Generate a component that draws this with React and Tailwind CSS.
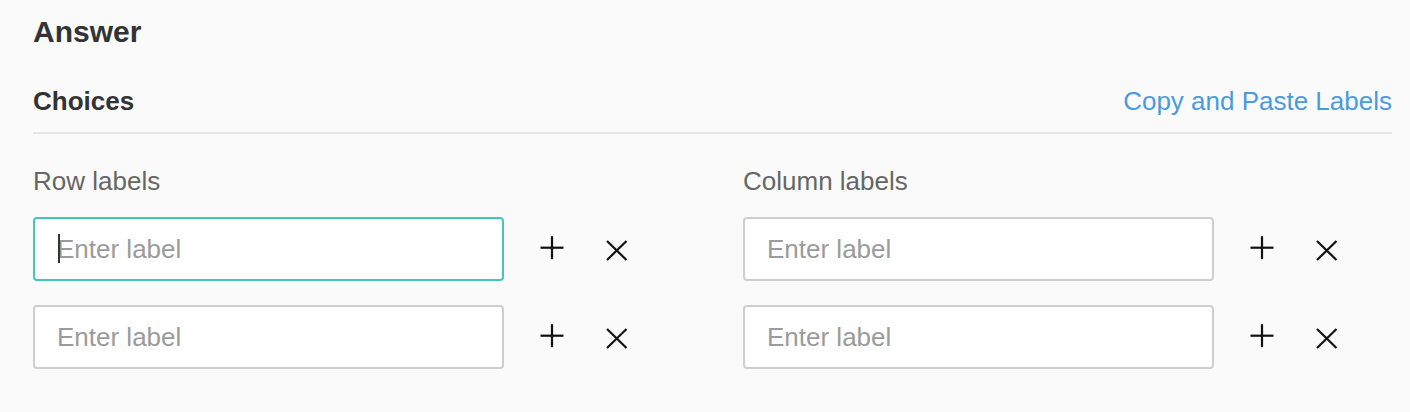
import React from "react";

function PlusIcon() {
  return (
    <svg width="64" height="64" viewBox="0 0 64 64" fill="none" stroke="#111" strokeWidth="2.2" aria-hidden="true">
      <line x1="20.5" y1="30.7" x2="43.5" y2="30.7" />
      <line x1="32" y1="19.2" x2="32" y2="42.2" />
    </svg>
  );
}

function XIcon() {
  return (
    <svg width="64" height="64" viewBox="0 0 64 64" fill="none" stroke="#111" strokeWidth="2.2" aria-hidden="true">
      <line x1="23" y1="24" x2="42.5" y2="43" />
      <line x1="42.5" y1="24" x2="23" y2="43" />
    </svg>
  );
}

function LabelRow({ focused }) {
  return (
    <div className="flex">
      <div className="relative">
        <input
          type="text"
          placeholder="Enter label"
          className={
            "block w-[471px] h-[64px] rounded-[4px] border-2 bg-white pl-[22px] pr-[12px] text-[26px] text-[#333] outline-none placeholder:text-[#9b9b9b] caret-transparent " +
            (focused ? "border-[#48c4bf]" : "border-[#cecece]")
          }
        />
        {focused && (
          <span className="pointer-events-none absolute left-[25px] top-[17px] h-[29px] w-[2px] bg-[#333]" />
        )}
      </div>
      <button type="button" className="ml-[16px] flex h-[64px] w-[64px] items-center justify-center" aria-label="Add">
        <PlusIcon />
      </button>
      <button type="button" className="flex h-[64px] w-[64px] items-center justify-center" aria-label="Remove">
        <XIcon />
      </button>
    </div>
  );
}

function Column({ title, focusFirst }) {
  return (
    <div>
      <div className="text-[26px] leading-[30px] text-[#666]">{title}</div>
      <div className="mt-[21px] flex flex-col gap-[24px]">
        <LabelRow focused={focusFirst} />
        <LabelRow />
      </div>
    </div>
  );
}

export default function App() {
  return (
    <div
      className="min-h-screen bg-[#fafafa] pl-[33px] pr-[18px] pt-[14px]"
      style={{ fontFamily: '"Liberation Sans", Arial, Helvetica, sans-serif' }}
    >
      <h2 className="text-[30px] font-bold leading-[36px] text-[#333]">Answer</h2>
      <div className="mt-[36px] flex items-baseline justify-between border-b-2 border-[#e6e6e6] pb-[16px]">
        <h3 className="text-[26px] font-bold leading-[30px] text-[#333]">Choices</h3>
        <button type="button" className="text-[26px] leading-[30px] text-[#4a9ae0]">
          Copy and Paste Labels
        </button>
      </div>
      <div className="mt-[32px] grid grid-cols-2 gap-x-[61px]">
        <Column title="Row labels" focusFirst />
        <Column title="Column labels" />
      </div>
    </div>
  );
}
